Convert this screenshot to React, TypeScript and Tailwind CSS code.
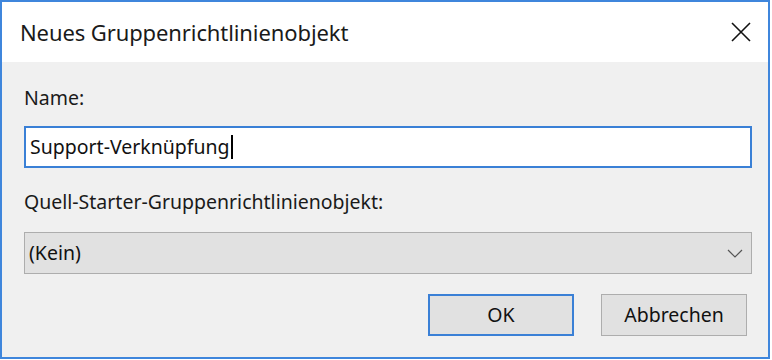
const font = { fontFamily: '"Noto Sans", "Liberation Sans", sans-serif' };

export default function App() {
  return (
    <div className="w-[772px] h-[360px] bg-white pr-[2px] pb-[1px]" style={font}>
      <div className="flex flex-col h-full border-2 border-[#3f86dc] bg-[#f0f0f0]">
        {/* Title bar */}
        <div className="flex items-center justify-between h-[60px] bg-white pl-[18px] pr-[16px]">
          <span className="text-[22px] text-[#1a1a1a] tracking-[-0.1px]">Neues Gruppenrichtlinienobjekt</span>
          <svg width="22" height="22" viewBox="0 0 22 22" fill="none" stroke="#111" strokeWidth="1.6">
            <path d="M2 2 L20 20 M20 2 L2 20" />
          </svg>
        </div>

        {/* Body */}
        <div className="flex flex-col pl-[22px] pr-[16px] pt-[23px]">
          <label className="text-[19.5px] text-[#1a1a1a] leading-[26px]">Name:</label>
          <div className="mt-[15px] h-[42px] border-2 border-[#3a80d6] bg-white flex items-center pl-[4px]">
            <span className="text-[19.5px] text-[#111] whitespace-pre">Support-Verknüpfung</span>
            <span className="ml-[1px] w-[2px] h-[24px] bg-black" />
          </div>

          <label className="mt-[21px] text-[19.5px] text-[#1a1a1a] leading-[26px]">
            Quell-Starter-Gruppenrichtlinienobjekt:
          </label>
          <div className="mt-[17px] h-[42px] border border-[#adadad] bg-[#e1e1e1] flex items-center justify-between pl-[4px] pr-[8px]">
            <span className="text-[19.5px] text-[#111]">(Kein)</span>
            <svg width="16" height="9" viewBox="0 0 16 9" fill="none" stroke="#555" strokeWidth="1.2">
              <path d="M1 1 L8 8 L15 1" />
            </svg>
          </div>

          <div className="flex justify-end gap-[27px] mt-[20px] mr-[5px]">
            <button className="w-[146px] h-[42px] border-2 border-[#3a80d6] bg-[#e1e1e1] text-[19.5px] text-[#111]">
              OK
            </button>
            <button className="w-[146px] h-[42px] border border-[#adadad] bg-[#e1e1e1] text-[19.5px] text-[#111]">
              Abbrechen
            </button>
          </div>
        </div>
      </div>
    </div>
  );
}
